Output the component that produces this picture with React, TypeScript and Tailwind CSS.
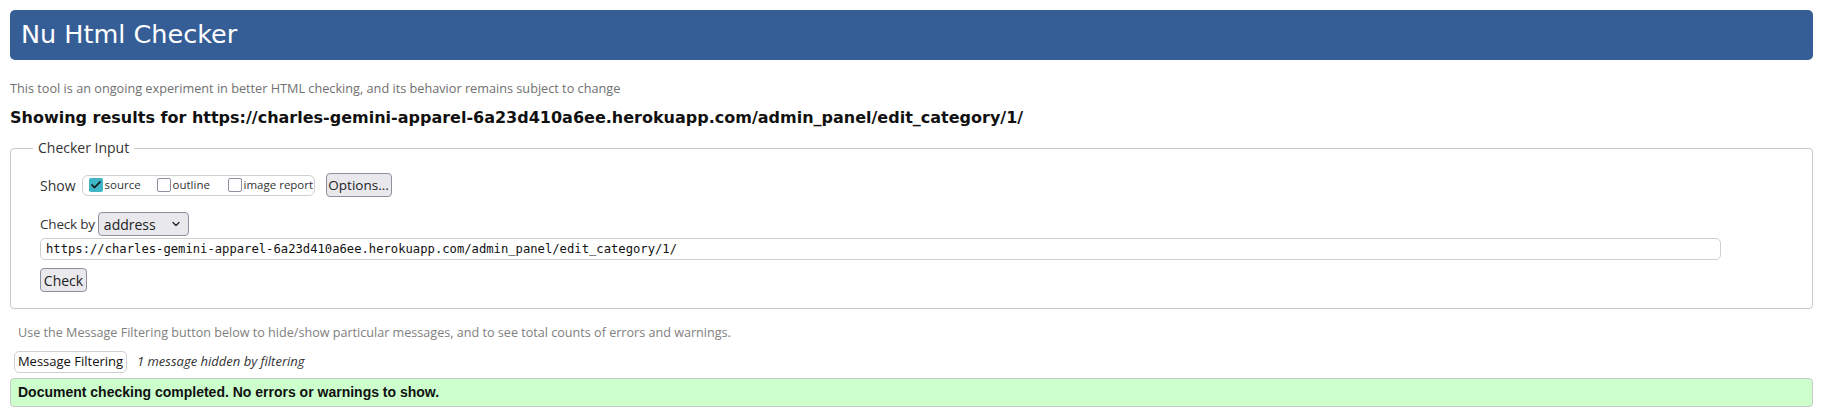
import { Check, ChevronDown } from "lucide-react";

const url = "https://charles-gemini-apparel-6a23d410a6ee.herokuapp.com/admin_panel/edit_category/1/";

function Box({ checked, label, w }: { checked?: boolean; label: string; w: string }) {
    return (
        <label className={`flex shrink-0 items-center gap-[2px] whitespace-nowrap ${w}`}>
            {checked ? (
                <span className="flex h-[14px] w-[14px] items-center justify-center rounded-[2px] bg-[#3fb5c6]">
                    <Check size={12} strokeWidth={3.5} color="#111" />
                </span>
            ) : (
                <span className="h-[14px] w-[14px] rounded-[2px] border border-[#8f8f9d] bg-white" />
            )}
            <span className="text-[11.5px] text-[#333]">{label}</span>
        </label>
    );
}

export default function App() {
    return (
        <div className="min-h-screen bg-white pl-[10px] pr-[12px] pt-[10px] font-['Open_Sans',sans-serif] text-[#222]">
            {/* title bar */}
            <div className="flex h-[50px] items-center rounded-[5px] bg-[#365e96] pl-[11px]">
                <h1 className="font-['DejaVu_Sans',sans-serif] text-[25.5px] leading-none text-white">Nu Html Checker</h1>
            </div>

            <p className="mt-[18px] text-[12.7px] leading-[20px] text-[#707070]">
                This tool is an ongoing experiment in better HTML checking, and its behavior remains subject to change
            </p>
            <h2 className="mt-[10px] font-['DejaVu_Sans',sans-serif] text-[16px] font-bold leading-[20px] text-[#111]">
                Showing results for {url}
            </h2>

            <fieldset className="mt-[11px] rounded-[4px] border border-[#c8c8c8] pb-[16px] pl-[29px]">
                <legend className="ml-[-7px] px-[5px] text-[14px] leading-[18px] text-[#333]">Checker Input</legend>

                <div className="mt-[16px] flex items-center">
                    <span className="mr-[6px] text-[14px] text-[#333]">Show</span>
                    <div className="flex h-[21px] w-[233px] items-center rounded-[6px] border border-[#cfcfcf] pl-[6px]">
                        <Box checked label="source" w="w-[68px]" />
                        <Box label="outline" w="w-[71px]" />
                        <Box label="image report" w="w-auto" />
                    </div>
                    <button className="ml-[11px] h-[24px] w-[66px] rounded-[4px] border border-[#8f8f9d] bg-[#e9e9ed] text-[13.5px] text-[#222]">
                        Options...
                    </button>
                </div>

                <div className="mt-[15px] flex items-center">
                    <span className="mr-[3px] text-[13.5px] tracking-[-0.2px] text-[#333]">Check by</span>
                    <div className="flex h-[24px] w-[91px] items-center justify-between rounded-[4px] border border-[#8f8f9d] bg-[#e9e9ed] pl-[5px] pr-[6px]">
                        <span className="text-[14px] text-[#222]">address</span>
                        <ChevronDown size={12} strokeWidth={2.5} color="#222" />
                    </div>
                </div>

                <div className="mt-[2px] flex h-[22px] w-[1681px] items-center rounded-[5px] border border-[#cfcfcf] px-[5px] font-['DejaVu_Sans_Mono',monospace] text-[12.2px] text-[#111]">
                    {url}
                </div>

                <button className="mt-[8px] h-[24px] w-[47px] rounded-[4px] border border-[#8f8f9d] bg-[#e9e9ed] text-[14px] text-[#222]">
                    Check
                </button>
            </fieldset>

            <p className="ml-[8px] mt-[14px] text-[12.6px] leading-[20px] text-[#808080]">
                Use the Message Filtering button below to hide/show particular messages, and to see total counts of errors and warnings.
            </p>

            <div className="mt-[8px] flex items-center">
                <button className="ml-[4px] h-[22px] w-[113px] rounded-[5px] border border-[#cfcfcf] bg-white text-[13px] text-[#111]">
                    Message Filtering
                </button>
                <span className="ml-[10px] text-[13px] italic text-[#333]">1 message hidden by filtering</span>
            </div>

            <div className="mt-[5px] flex h-[29px] items-center rounded-[4px] border border-[#c8c8c8] bg-[#ccffcc] pl-[7px] font-['Liberation_Sans',sans-serif] text-[14px] font-bold text-[#111]">
                Document checking completed. No errors or warnings to show.
            </div>
        </div>
    );
}
